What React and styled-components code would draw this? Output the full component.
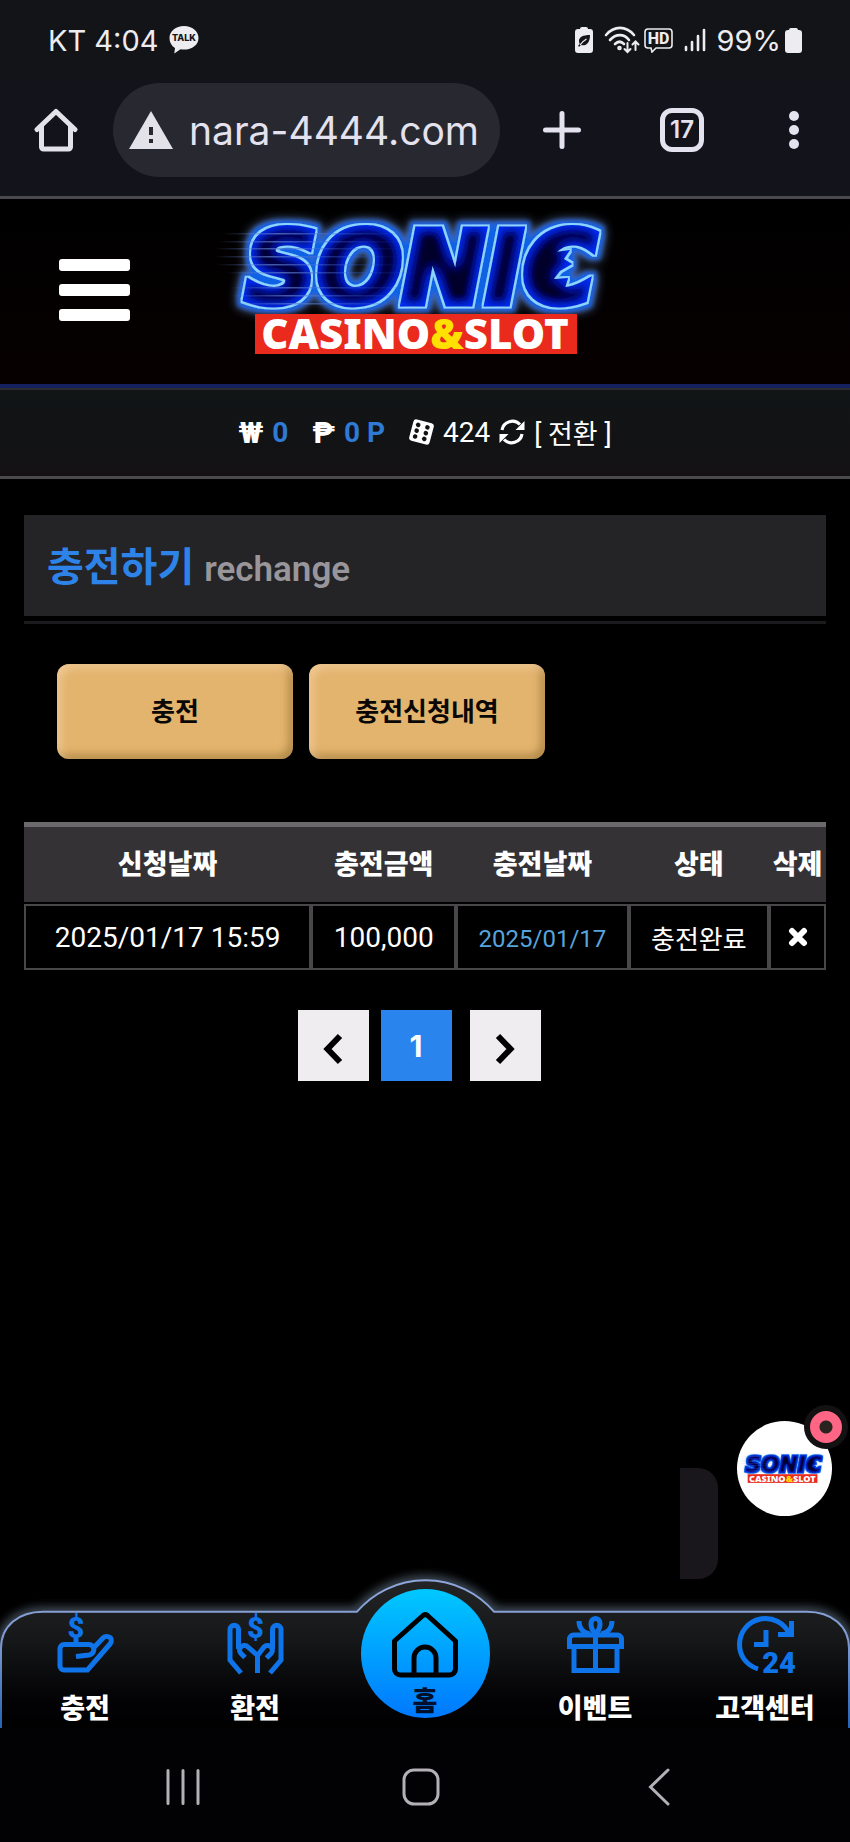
import React, { useState } from 'react';
import styled, { createGlobalStyle } from 'styled-components';

const GlobalStyle = createGlobalStyle`
  * { box-sizing: border-box; }
  body {
    margin: 0;
    background: #000;
    color: #fff;
    font-family: Roboto, "Noto Sans CJK KR", sans-serif;
  }
  button {
    border: none;
    padding: 0;
    background: none;
    color: inherit;
    font-family: inherit;
    cursor: pointer;
  }
  a { color: inherit; text-decoration: none; }
  svg { display: block; flex: none; }
`;

/* ---------- status bar + browser ---------- */

function StatusBar() {
  return (
    <Status>
      <StatusGroup>
        <span>KT 4:04</span>
        <svg width="30" height="28" viewBox="0 0 30 28" aria-label="KakaoTalk">
          <path d="M15 0C6.700 0 .5 5 .5 12c0 4.500 2 7.800 5.500 10L5.300 27.500l6.200-4.200c1 .2 2.300.3 3.500.3 8.300 0 14.500-4.800 14.500-11.600S23.300 0 15 0z" fill="#ececf1" />
          <text x="15" y="15" textAnchor="middle" fontFamily="Inter, sans-serif" fontSize="9" fontWeight="800" fill="#131417">TALK</text>
        </svg>
      </StatusGroup>
      <StatusGroup>
        <svg width="18" height="26" viewBox="0 0 18 26">
          <path d="M5 2a2 2 0 0 1 2-2h4a2 2 0 0 1 2 2h2a3 3 0 0 1 3 3v18a3 3 0 0 1-3 3H3a3 3 0 0 1-3-3V5a3 3 0 0 1 3-3z" fill="#ececf1" />
          <path d="M15 8C8 8 4 10 4 14c0 1 .3 2 .7 2.700L3 19l1.200.7L6 18c5 1.500 9-2 9-10z" fill="#131417" />
          <path d="M5 18c2-3 4-4.500 6.500-6" stroke="#ececf1" strokeWidth="1.300" fill="none" />
        </svg>
        <Network>
          <svg width="36" height="28" viewBox="0 0 36 28" fill="none" stroke="#ececf1" strokeWidth="2.600" strokeLinecap="round">
            <path d="M2 9C10-.5 22-.5 30 9" />
            <path d="M6 14c6-6.500 14-6.500 19 0" />
            <path d="M11 18c3-3 6-3 9 0" />
            <circle cx="15.500" cy="22" r="1" />
            <path d="M23.500 17v8.500M20.500 23l3 3 3-3M31.500 24v-8M28.500 18.500l3-3 3 3" strokeWidth="2" />
          </svg>
          <svg width="29" height="25" viewBox="0 0 29 25">
            <path d="M4 1h21a3 3 0 0 1 3 3v13a3 3 0 0 1-3 3H12l-4 4-1-4H4a3 3 0 0 1-3-3V4a3 3 0 0 1 3-3z" fill="none" stroke="#ececf1" strokeWidth="1.600" />
            <text x="14.500" y="16" textAnchor="middle" fontFamily="Roboto, sans-serif" fontSize="16" fontWeight="800" fill="#ececf1">HD</text>
          </svg>
        </Network>
        <svg width="22" height="24" viewBox="0 0 22 24" stroke="#ececf1" strokeWidth="2.600" strokeLinecap="round">
          <path d="M2 19v3M8 14v8M14 8v14M20 2v20" />
        </svg>
        <Battery>
          <span>99%</span>
          <svg width="17" height="25" viewBox="0 0 17 25">
            <path d="M4 2a2 2 0 0 1 2-2h5a2 2 0 0 1 2 2h1a3 3 0 0 1 3 3v17a3 3 0 0 1-3 3H3a3 3 0 0 1-3-3V5a3 3 0 0 1 3-3z" fill="#ececf1" />
          </svg>
        </Battery>
      </StatusGroup>
    </Status>
  );
}

function BrowserBar() {
  const [url, setUrl] = useState('nara-4444.com');
  return (
    <Browser>
      <button aria-label="홈페이지">
        <svg width="44" height="44" viewBox="0 0 44 44" fill="none" stroke="#e4e2e9" strokeWidth="5" strokeLinejoin="round" strokeLinecap="round">
          <path d="M3 21.500L22 3.500l19 18" />
          <path d="M7.500 19v20a2 2 0 0 0 2 2h25a2 2 0 0 0 2-2V19" />
        </svg>
      </button>
      <Address>
        <svg width="44" height="38" viewBox="0 0 44 38">
          <path d="M22 0l22 38H0z" fill="#e4e2e9" />
          <path d="M20 16h4v8h-4zM20 28h4v4h-4z" fill="#282831" />
        </svg>
        <AddressInput aria-label="주소" value={url} onChange={(e) => setUrl(e.target.value)} />
      </Address>
      <BrowserActions>
        <button aria-label="새 탭">
          <svg width="38" height="38" viewBox="0 0 38 38" stroke="#e4e2ef" strokeWidth="5" strokeLinecap="round">
            <path d="M19 2.500v33M2.500 19h33" />
          </svg>
        </button>
        <TabCount aria-label="탭 17개">17</TabCount>
        <button aria-label="더보기">
          <svg width="20" height="38" viewBox="0 0 20 38" fill="#e4e2ef">
            <circle cx="11" cy="5" r="5" />
            <circle cx="11" cy="19" r="5" />
            <circle cx="11" cy="33" r="5" />
          </svg>
        </button>
      </BrowserActions>
    </Browser>
  );
}

/* ---------- logo ---------- */

const speedLines = [
  [22, 27], [18, 35], [14, 42], [14, 50], [16, 58], [26, 66], [30, 81], [30, 89], [36, 97],
];

/* the neon look (halo, thin outline, bright rim) all comes from one filter */
function Logo({ id, width, height, small }) {
  return (
    <svg width={width} height={height} viewBox="15 0 420 166" role="img" aria-label="SONIC CASINO & SLOT">
      <defs>
        <filter id={`${id}-neon`} x="-15%" y="-40%" width="130%" height="180%">
          <feMorphology in="SourceAlpha" operator="dilate" radius="6" result="fat" />
          <feGaussianBlur in="fat" stdDeviation="5" result="fatSoft" />
          <feFlood floodColor="#5f84bd" floodOpacity={small ? 0.3 : 0.8} />
          <feComposite in2="fatSoft" operator="in" result="glow" />

          <feMorphology in="SourceAlpha" operator="dilate" radius="5" result="mid" />
          <feGaussianBlur in="mid" stdDeviation="2" result="midSoft" />
          <feFlood floodColor="#0a62e6" />
          <feComposite in2="midSoft" operator="in" result="halo" />

          <feMorphology in="SourceAlpha" operator="dilate" radius="1.5" result="edge" />
          <feFlood floodColor={small ? '#0a4fd0' : '#8ad4ff'} />
          <feComposite in2="edge" operator="in" result="outline" />

          <feComponentTransfer in="SourceAlpha" result="inv">
            <feFuncA type="table" tableValues="1 0" />
          </feComponentTransfer>
          <feGaussianBlur in="inv" stdDeviation="6" result="soft" />
          <feFlood floodColor="#0030ff" />
          <feComposite in2="soft" operator="in" />
          <feComposite in2="SourceAlpha" operator="in" result="rim" />
          <feMerge>
            <feMergeNode in="glow" />
            <feMergeNode in="halo" />
            <feMergeNode in="outline" />
            <feMergeNode in="SourceGraphic" />
            <feMergeNode in="rim" />
            <feMergeNode in="rim" />
          </feMerge>
        </filter>
        <linearGradient id={`${id}-line`} x1="0" x2="1">
          <stop offset="0" stopColor="#5f7fd0" stopOpacity="0" />
          <stop offset=".3" stopColor="#5f7fd0" stopOpacity=".7" />
          <stop offset="1" stopColor="#2250d8" stopOpacity="0" />
        </linearGradient>
      </defs>
      <g filter={`url(#${id}-neon)`} fill="#00002a" stroke="#00002a" strokeWidth="7">
        <text x="45" y="96" fontFamily="'DejaVu Sans', sans-serif" fontSize="100" fontWeight="700" fontStyle="italic">SONIC</text>
        <path d="M346 46l24-3-6 9 8 5-12 7-6 8 14-1-4 14-18-4z" stroke="none" />
      </g>
      {speedLines.map(([x, y]) => (
        <rect key={y} x={x} y={y - 1} width="190" height="1.500" fill={`url(#${id}-line)`} />
      ))}
      <rect x="55" y="107" width="322" height="40" fill="#e92a1c" />
      <text x="215" y="142" textAnchor="middle" fontFamily="'Noto Sans', sans-serif" fontSize="42" fontWeight="900" fill="#fff">
        CASINO<tspan fill="#ffe000">&amp;</tspan>SLOT
      </text>
    </svg>
  );
}

/* ---------- account bar ---------- */

function AccountBar() {
  return (
    <Account>
      <Money>
        <Sign>₩</Sign>
        <Amount>0</Amount>
      </Money>
      <Money>
        <Sign>₱</Sign>
        <Amount>0 P</Amount>
      </Money>
      <Convert>
        <svg width="25" height="26" viewBox="0 0 25 26">
          <g transform="rotate(15 12.500 13)">
            <rect x="2" y="2" width="21" height="22" rx="3" fill="#fff" />
            {[7, 13, 19].map((y) => (
              <g key={y} fill="#121214">
                <circle cx="7.500" cy={y} r="2.300" />
                <circle cx="17" cy={y} r="2.300" />
              </g>
            ))}
          </g>
        </svg>
        <span>424</span>
        <RefreshButton aria-label="새로고침">
          <svg width="26" height="26" viewBox="0 0 26 26">
            <path d="M3 11a10.500 10.500 0 0 1 18-5.500M23 15a10.500 10.500 0 0 1-18 5.500" fill="none" stroke="#fff" strokeWidth="3.200" />
            <path d="M25.500 2v9h-9zM.5 24v-9h9z" fill="#fff" />
          </svg>
        </RefreshButton>
        <ConvertButton>[ 전환 ]</ConvertButton>
      </Convert>
    </Account>
  );
}

/* ---------- charge history ---------- */

const rows = [
  { requested: '2025/01/17 15:59', amount: '100,000', charged: '2025/01/17', state: '충전완료' },
];

function History() {
  return (
    <Table>
      <colgroup>
        <Col $w={35.8} />
        <Col $w={18.1} />
        <Col $w={21.5} />
        <Col $w={17.5} />
        <Col $w={7.1} />
      </colgroup>
      <thead>
        <tr>
          <th>신청날짜</th>
          <th>충전금액</th>
          <th>충전날짜</th>
          <th>상태</th>
          <th>삭제</th>
        </tr>
      </thead>
      <tbody>
        {rows.map((row) => (
          <tr key={row.requested}>
            <td>{row.requested}</td>
            <td>{row.amount}</td>
            <td><ChargedDate>{row.charged}</ChargedDate></td>
            <td><State>{row.state}</State></td>
            <td>
              <DeleteButton aria-label="삭제">
                <svg width="20" height="20" viewBox="0 0 20 20" stroke="#fff" strokeWidth="6" strokeLinecap="round">
                  <path d="M4 4l12 12M16 4L4 16" />
                </svg>
              </DeleteButton>
            </td>
          </tr>
        ))}
      </tbody>
    </Table>
  );
}

function Pagination() {
  return (
    <Pages aria-label="페이지">
      <PageButton aria-label="이전">
        <svg width="20" height="32" viewBox="0 0 20 32" fill="none" stroke="#000" strokeWidth="6">
          <path d="M17 3L4.500 16 17 29" />
        </svg>
      </PageButton>
      <PageButton $active>1</PageButton>
      <NextButton aria-label="다음">
        <svg width="20" height="32" viewBox="0 0 20 32" fill="none" stroke="#000" strokeWidth="6">
          <path d="M3 3l12.500 13L3 29" />
        </svg>
      </NextButton>
    </Pages>
  );
}

/* ---------- bottom menu ---------- */

const glyph = {
  textAnchor: 'middle',
  fontFamily: 'Roboto, sans-serif',
  fontSize: 29,
  fontWeight: 900,
  fill: '#0f74ea',
  stroke: 'none',
};

const ChargeIcon = () => (
  <MenuSvg viewBox="0 0 57 57">
    <text x="19" y="22" {...glyph}>$</text>
    <path d="M19 22v5" />
    <path d="M19 40.500l13-1.500c5-1 6-6 3.500-9-1-1-2-1.500-3.500-1.500H7a4 4 0 0 0-4 4V50a4 4 0 0 0 4 4h23.500L53 28c2.500-3 1-6 0-6.500-2-1.500-5-1.500-6.500 0L35.500 33" />
  </MenuSvg>
);

const ExchangeIcon = () => (
  <MenuSvg viewBox="0 0 57 57">
    <text x="28.500" y="22" {...glyph}>$</text>
    <path d="M30.500 57V39.500L21 31c-2.500-2.500-6-1.500-7.500.5-1.500 2-1 4.500.5 6l4 4M11.500 33V13.500a4.200 4.200 0 0 0-8.500 0V44l11 13" />
    <path d="M30.500 39.500L37 31c2.500-2.500 6-1.500 7.500.5 1.500 2 1 4.500-.5 6l-4.500 4.500M45.500 33V13.500a4.200 4.200 0 0 1 8.500 0V44L43 57" />
  </MenuSvg>
);

const EventIcon = () => (
  <MenuSvg viewBox="0 0 57 57">
    <path d="M2.500 33V23a4 4 0 0 1 4-4h44a4 4 0 0 1 4 4v10" />
    <path d="M0 30.500h57M7 31v23.500h43V31M28.500 18v36" />
    <path d="M28.500 18c-6-6-6-15.500 0-15.500s6 9.500 0 15.500zM12 5c0 7 4 12 11 13M45 5c0 7-4 12-11 13" />
  </MenuSvg>
);

const CenterIcon = () => (
  <MenuSvg viewBox="0 0 57 57">
    <path d="M21 53C9 49 2.500 39.500 2.500 28.500a26 26 0 0 1 50-10" />
    <path d="M54.500 5v13.500H41" />
    <path d="M29 14v14.500H17" />
    <text x="42" y="57" {...glyph}>24</text>
  </MenuSvg>
);

function BottomMenu() {
  return (
    <Bottom>
      <BottomShape viewBox="0 0 850 168" preserveAspectRatio="none" aria-hidden="true">
        <defs>
          <linearGradient id="menu-fill" x1="0" y1="0" x2="0" y2="1">
            <stop offset="0" stopColor="#222425" />
            <stop offset=".4" stopColor="#151718" />
            <stop offset=".8" stopColor="#030205" />
            <stop offset="1" stopColor="#000" />
          </linearGradient>
          <linearGradient id="menu-line" x1="0" y1="0" x2="0" y2="1">
            <stop offset="0" stopColor="#8ea6dc" />
            <stop offset=".4" stopColor="#7f9ad0" />
            <stop offset="1" stopColor="#2462b4" />
          </linearGradient>
          <filter id="menu-glow" x="-5%" y="-20%" width="110%" height="140%">
            <feGaussianBlur stdDeviation="5" />
          </filter>
        </defs>
        <path d="M1 170V88C1 65 19 51 43 51H357A90 90 0 0 1 494 51H807C831 51 849 65 849 88V170" fill="none" stroke="#4e5c6a" strokeWidth="8" filter="url(#menu-glow)" />
        <path d="M1 170V88C1 65 19 51 43 51H357A90 90 0 0 1 494 51H807C831 51 849 65 849 88V170" fill="url(#menu-fill)" stroke="url(#menu-line)" strokeWidth="2" />
      </BottomShape>
      <MenuLink href="#charge"><ChargeIcon />충전</MenuLink>
      <MenuLink href="#exchange"><ExchangeIcon />환전</MenuLink>
      <HomeLink href="#home">
        <svg width="66" height="66" viewBox="0 0 66 66" fill="none" stroke="#000" strokeWidth="5" strokeLinejoin="round">
          <path d="M31 3.500a3.500 3.500 0 0 1 4.500 0L63.500 29v28a6 6 0 0 1-6 6h-49a6 6 0 0 1-6-6V29z" />
          <path d="M22 63V46a11 11 0 0 1 22 0v17" />
        </svg>
        홈
      </HomeLink>
      <MenuLink href="#event"><EventIcon />이벤트</MenuLink>
      <MenuLink href="#center"><CenterIcon />고객센터</MenuLink>
    </Bottom>
  );
}

function SystemNav() {
  return (
    <System>
      <button aria-label="최근 앱">
        <svg width="34" height="38" viewBox="0 0 34 38" stroke="#b3b1b5" strokeWidth="3" strokeLinecap="round">
          <path d="M2 2.500v33M17 2.500v33M32 2.500v33" />
        </svg>
      </button>
      <button aria-label="홈 화면">
        <svg width="38" height="38" viewBox="0 0 38 38" fill="none" stroke="#b3b1b5" strokeWidth="3">
          <rect x="2" y="2" width="34" height="34" rx="10" />
        </svg>
      </button>
      <button aria-label="뒤로">
        <svg width="22" height="38" viewBox="0 0 22 38" fill="none" stroke="#b3b1b5" strokeWidth="3" strokeLinecap="round">
          <path d="M20 2L2.500 19 20 36" />
        </svg>
      </button>
    </System>
  );
}

export default function App() {
  return (
    <Page>
      <GlobalStyle />
      <StatusBar />
      <BrowserBar />
      <Header>
        <MenuButton aria-label="메뉴">
          <i /><i /><i />
        </MenuButton>
        <Logo id="logo" width={420} height={166} />
      </Header>
      <AccountBar />
      <Main>
        <TitleBox>
          <Title>충전하기 <small>rechange</small></Title>
        </TitleBox>
        <Tabs>
          <GoldButton>충전</GoldButton>
          <GoldButton>충전신청내역</GoldButton>
        </Tabs>
        <History />
        <Pagination />
        <EdgeHandle />
        <ChatButton aria-label="채팅 상담">
          <Logo id="chat" width={91} height={36} small />
          <Badge />
        </ChatButton>
      </Main>
      <BottomMenu />
      <SystemNav />
    </Page>
  );
}

const Page = styled.div`
  min-height: 100vh;
  display: flex;
  flex-direction: column;
`;

const Status = styled.div`
  height: 80px;
  padding: 0 48px;
  display: flex;
  justify-content: space-between;
  align-items: center;
  background: #131417;
  color: #ececf1;
  font-family: Inter, sans-serif;
  font-size: 29px;
`;

const StatusGroup = styled.div`
  display: flex;
  align-items: center;
  gap: 11px;
`;

const Network = styled.div`
  display: flex;
  align-items: center;
  gap: 4px;
`;

const Battery = styled.div`
  display: flex;
  align-items: center;
  gap: 4px;
`;

const Browser = styled.div`
  height: 119px;
  padding: 0 47px 16px 34px;
  display: flex;
  align-items: center;
  background: #13131b;
  border-bottom: 3px solid #4a4950;
`;

const Address = styled.label`
  width: 387px;
  height: 94px;
  margin-left: 35px;
  padding: 0 12px 0 16px;
  display: flex;
  align-items: center;
  gap: 16px;
  border-radius: 47px;
  background: #282831;
`;

const AddressInput = styled.input`
  flex: 1;
  min-width: 0;
  padding: 0;
  border: none;
  outline: none;
  background: none;
  color: #e4e2ef;
  font-family: Inter, sans-serif;
  font-size: 39px;
`;

const BrowserActions = styled.div`
  flex: 1;
  display: flex;
  justify-content: space-between;
  align-items: center;
  margin-left: 43px;
`;

const TabCount = styled.button`
  width: 44px;
  height: 44px;
  border: 5px solid #e4e2ef;
  border-radius: 12px;
  color: #e4e2ef;
  font-family: Inter, sans-serif;
  font-size: 24px;
  font-weight: 600;
  line-height: 34px;
`;

const Header = styled.header`
  height: 189px;
  padding-bottom: 4px;
  display: grid;
  grid-template-columns: 1fr auto 1fr;
  align-items: center;
  background: linear-gradient(180deg, #000, #070001);
  border-bottom: 4px solid #15205e;
`;

const MenuButton = styled.button`
  width: 71px;
  margin-left: 59px;
  display: grid;
  gap: 13px;

  i {
    height: 12px;
    border-radius: 3px;
    background: #fff;
  }
`;

const Account = styled.section`
  height: 91px;
  padding-bottom: 2px;
  display: flex;
  justify-content: center;
  align-items: center;
  gap: 24px;
  background: linear-gradient(180deg, #111516, #131114);
  border-top: 2px solid #2b2b31;
  border-bottom: 3px solid #4a494c;
  font-size: 28px;
`;

const Money = styled.div`
  display: flex;
  align-items: center;
  gap: 9px;
  font-weight: 700;
`;

const Sign = styled.span`
  font-size: 30px;
  font-weight: 800;
`;

const Amount = styled.span`
  color: #2f7ad5;
`;

const Convert = styled.div`
  display: flex;
  align-items: center;
  gap: 9px;
`;

const RefreshButton = styled.button`
  line-height: 0;
`;

const ConvertButton = styled.button`
  font-size: 27px;
`;

const Main = styled.main`
  position: relative;
  flex: 1;
  padding: 36px 24px 0;
`;

const TitleBox = styled.div`
  padding-bottom: 5px;
  border-bottom: 3px solid #1b1b1d;
`;

const Title = styled.h1`
  margin: 0;
  padding: 5px 23px 0;
  background: #242326;
  color: #2d83e8;
  font-size: 40px;
  font-weight: 700;
  line-height: 96px;

  small {
    color: #98969a;
    font-size: 35px;
    font-weight: 600;
    line-height: 1;
  }
`;

const Tabs = styled.div`
  display: flex;
  gap: 16px;
  padding: 40px 33px 0;
`;

const GoldButton = styled.button`
  width: 236px;
  height: 95px;
  padding-bottom: 4px;
  border-radius: 12px;
  background: #e3b46e;
  box-shadow: inset 4px 4px 8px rgba(255, 225, 190, .5), inset -4px -4px 8px rgba(110, 80, 20, .45);
  color: #0a0806;
  font-size: 26px;
  font-weight: 700;
`;

const Table = styled.table`
  width: 100%;
  margin-top: 63px;
  table-layout: fixed;
  border-collapse: separate;
  border-spacing: 0;
  text-align: center;

  th {
    height: 80px;
    padding: 0 0 4px;
    background: #343235;
    border-top: 5px solid #6b696c;
    font-size: 27px;
    font-weight: 900;
    white-space: nowrap;
  }

  td {
    height: 66px;
    padding: 0;
    border: 2px solid #49474a;
    font-size: 28px;
    white-space: nowrap;
  }

  thead::after {
    content: "";
    display: block;
    height: 2px;
  }
`;

const Col = styled.col`
  width: ${({ $w }) => $w}%;
`;

const ChargedDate = styled.span`
  color: #57a3dc;
  font-size: 24px;
`;

const State = styled.span`
  font-size: 26px;
`;

const DeleteButton = styled.button`
  display: block;
  margin: 0 auto;
`;

const Pages = styled.nav`
  display: flex;
  justify-content: center;
  gap: 12px;
  margin-top: 40px;
  padding-right: 12px;
`;

const PageButton = styled.button`
  width: 71px;
  height: 71px;
  display: flex;
  justify-content: center;
  align-items: center;
  padding-top: ${({ $active }) => ($active ? 0 : '6px')};
  background: ${({ $active }) => ($active ? '#2a84ee' : '#efedf0')};
  color: #fff;
  font-family: Inter, sans-serif;
  font-size: 30px;
  font-weight: 700;
`;

const NextButton = styled(PageButton)`
  margin-left: 6px;
`;

/* floats over the page, just above the bottom menu */
const ChatButton = styled.button`
  position: absolute;
  right: 18px;
  bottom: 45px;
  width: 95px;
  height: 95px;
  display: flex;
  justify-content: center;
  align-items: center;
  border-radius: 50%;
  background: #fff;
`;

const Badge = styled.span`
  position: absolute;
  top: -16px;
  right: -16px;
  width: 44px;
  height: 44px;
  border: 6px solid #131112;
  border-radius: 50%;
  background: radial-gradient(circle, #2a2420 0 6px, #ff6686 7px);
`;

const EdgeHandle = styled.div`
  position: absolute;
  right: 132px;
  bottom: -18px;
  width: 38px;
  height: 111px;
  border-radius: 0 20px 20px 0;
  background: #1a171c;
`;

/* the outline reaches above the links, so the menu starts at the glow */
const Bottom = styled.nav`
  position: relative;
  height: 167px;
  display: grid;
  grid-template-columns: repeat(5, 1fr);
  align-items: end;
`;

const BottomShape = styled.svg`
  position: absolute;
  inset: 0;
  width: 100%;
  height: 100%;
`;

const MenuLink = styled.a`
  position: relative;
  height: 112px;
  display: flex;
  flex-direction: column;
  align-items: center;
  gap: 17px;
  font-size: 27px;
  font-weight: 900;
  line-height: 38px;
`;

const MenuSvg = styled.svg`
  width: 57px;
  height: 57px;
  overflow: visible;
  fill: none;
  stroke: #0f74ea;
  stroke-width: 5;
`;

const HomeLink = styled.a`
  position: relative;
  justify-self: center;
  width: 129px;
  height: 129px;
  margin-bottom: 10px;
  padding-top: 23px;
  display: flex;
  flex-direction: column;
  align-items: center;
  gap: 5px;
  border-radius: 50%;
  background: linear-gradient(180deg, #00c8ff, #0078ff);
  color: #00102c;
  font-size: 27px;
  font-weight: 900;
  line-height: 38px;
`;

const System = styled.nav`
  height: 114px;
  padding: 4px 72px 0 64px;
  display: grid;
  grid-template-columns: repeat(3, 1fr);
  align-items: center;
  justify-items: center;
  background: #020103;
`;
